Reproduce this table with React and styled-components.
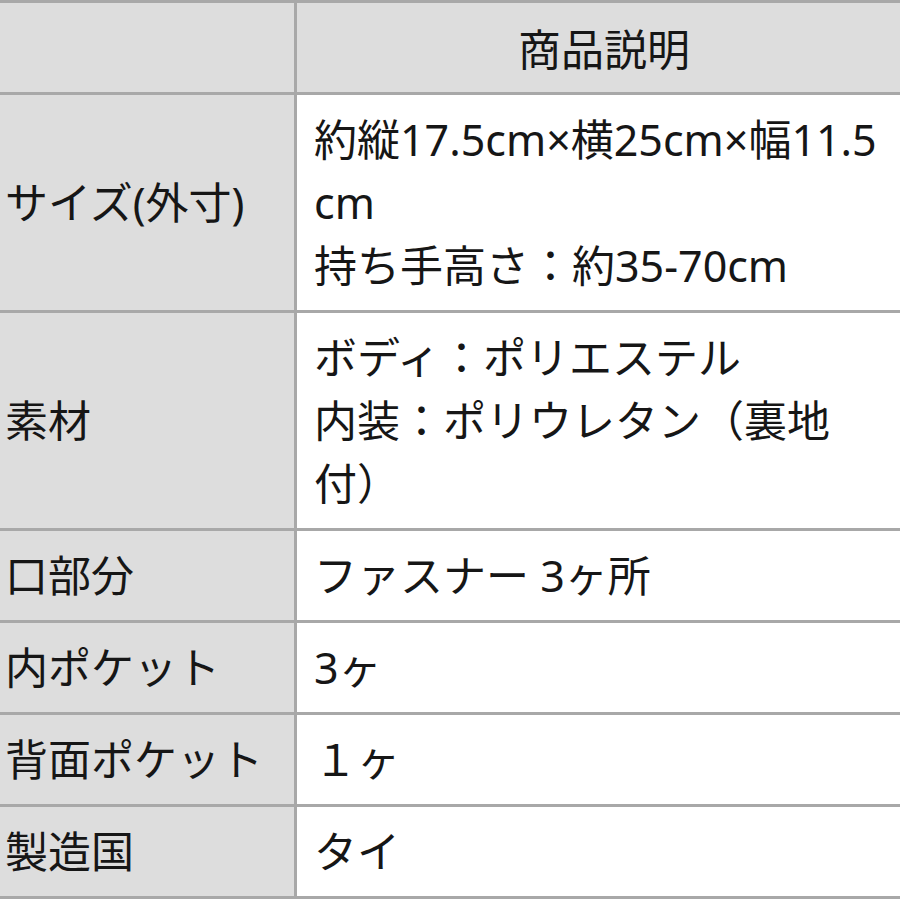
import styled, { createGlobalStyle } from 'styled-components'

const GlobalStyle = createGlobalStyle`
  html, body {
    margin: 0;
    padding: 0;
    background: #ffffff;
    overflow: hidden;
  }
`

const rows = [
  { label: 'サイズ(外寸)', value: ['約縦17.5cm×横25cm×幅11.5cm', '持ち手高さ：約35-70cm'] },
  { label: '素材', value: ['ボディ：ポリエステル', '内装：ポリウレタン（裏地付）'] },
  { label: '口部分', value: ['ファスナー 3ヶ所'] },
  { label: '内ポケット', value: ['3ヶ'] },
  { label: '背面ポケット', value: ['１ヶ'] },
  { label: '製造国', value: ['タイ'] },
]

export default function App() {
  return (
    <>
      <GlobalStyle />
      <Page>
        <SpecTable>
          <colgroup>
            <col style={{ width: 308 }} />
            <col style={{ width: 617 }} />
          </colgroup>
          <thead>
            <tr>
              <HeadCell />
              <HeadCell>商品説明</HeadCell>
            </tr>
          </thead>
          <tbody>
            {rows.map(row => (
              <tr key={row.label}>
                <LabelCell>{row.label}</LabelCell>
                <ValueCell>
                  {row.value.map(line => (
                    <Line key={line}>{line}</Line>
                  ))}
                </ValueCell>
              </tr>
            ))}
          </tbody>
        </SpecTable>
      </Page>
    </>
  )
}

const Page = styled.div`
  width: 900px;
  height: 900px;
  overflow: hidden;
  font-family: "Noto Sans", "Noto Sans CJK JP", sans-serif;
  color: #161616;
`

const SpecTable = styled.table`
  margin-left: -14px;
  width: 925px;
  table-layout: fixed;
  border-collapse: collapse;
  border: 3px solid #a8a8a8;

  th, td {
    border: 3px solid #a8a8a8;
    font-size: 43px;
    line-height: 63px;
    font-weight: 400;
    text-spacing-trim: space-all;
  }
`

const HeadCell = styled.th`
  background: #dddddd;
  height: 89px;
  padding: 0 16px;
  text-align: center;
  vertical-align: middle;
  font-family: "Noto Sans CJK JP", sans-serif;
`

const LabelCell = styled.td`
  background: #dddddd;
  padding: 13px 16px;
  text-align: left;
  vertical-align: middle;
  white-space: nowrap;
  overflow: hidden;
`

const ValueCell = styled.td`
  background: #ffffff;
  padding: 13px 20px 13px 17px;
  text-align: left;
  vertical-align: middle;
  word-break: break-all;
`

const Line = styled.div`
  display: block;
`
